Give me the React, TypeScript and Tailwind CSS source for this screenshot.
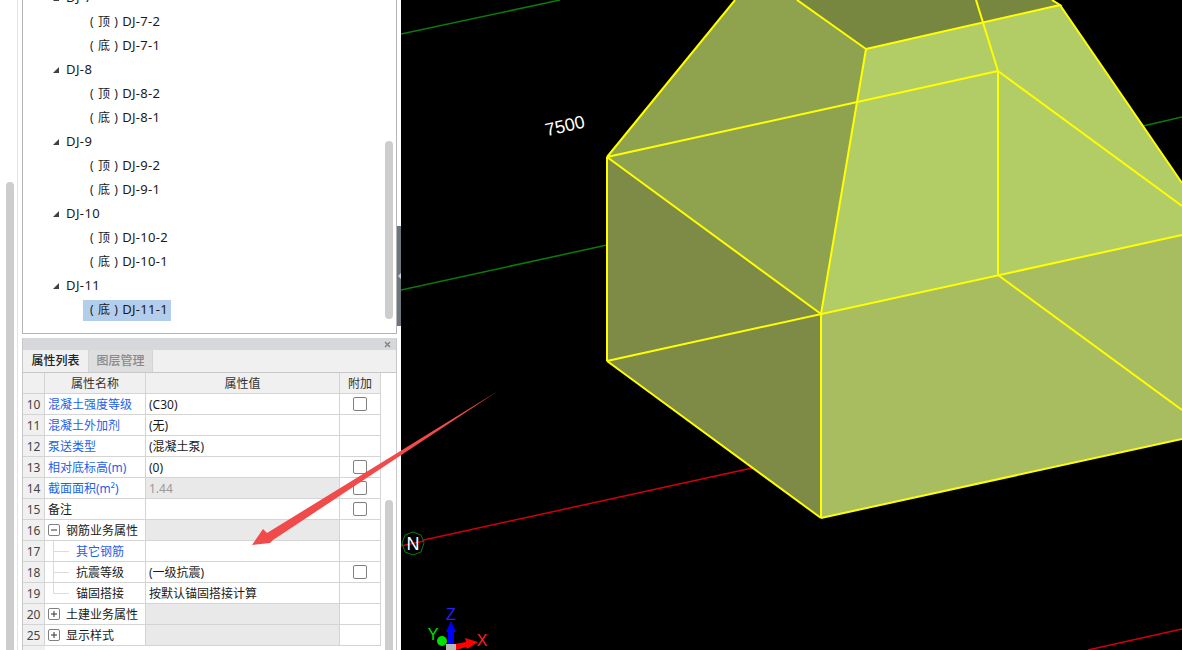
import React from 'react';

const font = { fontFamily: '"Noto Sans", "Noto Sans CJK SC", sans-serif' };

const treeGroups = [
  { name: 'DJ-7', kids: [['顶', 'DJ-7-2'], ['底', 'DJ-7-1']] },
  { name: 'DJ-8', kids: [['顶', 'DJ-8-2'], ['底', 'DJ-8-1']] },
  { name: 'DJ-9', kids: [['顶', 'DJ-9-2'], ['底', 'DJ-9-1']] },
  { name: 'DJ-10', kids: [['顶', 'DJ-10-2'], ['底', 'DJ-10-1']] },
  { name: 'DJ-11', kids: [['底', 'DJ-11-1']] },
];

type Row = {
  no: number;
  name: string;
  value?: string;
  blue?: boolean;
  check?: boolean;
  grey?: boolean;
  group?: '+' | '-';
  child?: 'mid' | 'last';
};

const rows: Row[] = [
  { no: 10, name: '混凝土强度等级', value: '(C30)', blue: true, check: true },
  { no: 11, name: '混凝土外加剂', value: '(无)', blue: true },
  { no: 12, name: '泵送类型', value: '(混凝土泵)', blue: true },
  { no: 13, name: '相对底标高(m)', value: '(0)', blue: true, check: true },
  { no: 14, name: '截面面积(m²)', value: '1.44', blue: true, check: true, grey: true },
  { no: 15, name: '备注', check: true },
  { no: 16, name: '钢筋业务属性', group: '-' },
  { no: 17, name: '其它钢筋', blue: true, child: 'mid' },
  { no: 18, name: '抗震等级', value: '(一级抗震)', check: true, child: 'mid' },
  { no: 19, name: '锚固搭接', value: '按默认锚固搭接计算', child: 'last' },
  { no: 20, name: '土建业务属性', group: '+' },
  { no: 25, name: '显示样式', group: '+' },
];

function TreeArrow() {
  return (
    <svg width="6" height="6" viewBox="0 0 6 6" className="shrink-0">
      <path d="M6 0V6H0Z" fill="#404040" />
    </svg>
  );
}

function Tree() {
  return (
    <div className="relative h-[334px] shrink-0 overflow-hidden border-x border-b border-[#b4b4b4] bg-white text-xs text-[#1a1a1a]">
      <div className="-mt-[14px]">
        {treeGroups.map((g) => (
          <div key={g.name}>
            <div className="flex h-6 items-center pl-[30px]">
              <TreeArrow />
              <span className="ml-[7px] text-[13px] tracking-[0.4px]">{g.name}</span>
            </div>
            {g.kids.map(([mark, label]) => (
              <div key={label} className="flex h-6 items-center pl-[60px]">
                <div className={`flex h-[21px] w-[88px] items-center pl-[7px] [word-spacing:1.2px] ${label === 'DJ-11-1' ? 'bg-[#b3cdec]' : ''}`}>
                  <span className="whitespace-pre">{`( ${mark} ) `}</span>
                  <span className="text-[13px] tracking-[0.3px]">{label}</span>
                </div>
              </div>
            ))}
          </div>
        ))}
      </div>
      {/* scrollbar */}
      <div className="absolute left-[362px] top-[141px] h-[178px] w-2 rounded bg-[#cdcdcd]" />
    </div>
  );
}

function Box({ mark }: { mark: '+' | '-' }) {
  return (
    <span className="flex h-[12px] w-[12px] shrink-0 items-center justify-center rounded-[2px] border border-[#808080] bg-white">
      <svg width="6" height="6" viewBox="0 0 6 6">
        <path d={mark === '+' ? 'M0 3H6M3 0V6' : 'M0 3H6'} stroke="#333" strokeWidth="1" />
      </svg>
    </span>
  );
}

function PropRow({ row }: { row: Row }) {
  const nameColor = row.blue ? 'text-[#1f5fe8]' : 'text-[#1a1a1a]';
  return (
    <div className="flex h-[21px] border-b border-[#d4d4d4]">
      <div className="flex w-[22px] shrink-0 items-center justify-center border-r border-[#d4d4d4] bg-[#f0f0f0] pt-[2px] text-[#444]">{row.no}</div>
      <div className={`relative flex w-[101px] shrink-0 items-center border-r border-[#d4d4d4] ${row.child ? 'pl-[31px]' : 'pl-[3px]'} ${nameColor}`}>
        {row.group && <Box mark={row.group} />}
        <span className={`pt-[2px] ${row.group ? 'ml-[6px]' : ''}`}>{row.name}</span>
        {row.child && (
          <>
            <div className={`absolute left-[8px] top-0 w-px bg-[#dcdcdc] ${row.child === 'last' ? 'h-[11px]' : 'h-[21px]'}`} />
            <div className="absolute left-[8px] top-[10px] h-px w-[16px] bg-[#dcdcdc]" />
          </>
        )}
      </div>
      <div className={`flex w-[194px] shrink-0 items-center border-r border-[#d4d4d4] pl-[3px] pt-[2px] ${row.group || row.grey ? 'bg-[#e9e9e9]' : ''} ${row.grey ? 'text-[#999]' : 'text-[#1a1a1a]'}`}>
        {row.value}
      </div>
      <div className="flex w-[41px] shrink-0 items-center justify-center border-r border-[#d4d4d4]">
        {row.check && <span className="h-[14px] w-[14px] rounded-[2px] border border-[#808080] bg-white" />}
      </div>
    </div>
  );
}

function Props() {
  return (
    <div className="relative mt-[4px] flex min-h-0 flex-1 flex-col overflow-hidden border-x border-[#c8c8c8] bg-white text-xs">
      <div className="flex h-[12px] shrink-0 items-center justify-end bg-[#d6d8db] pr-[5px]">
        <svg width="7" height="7" viewBox="0 0 7 7">
          <path d="M1 1L6 6M6 1L1 6" stroke="#808080" strokeWidth="1.4" />
        </svg>
      </div>
      <div className="flex h-[23px] shrink-0 border-b border-[#c8c8c8] bg-[#f0f0f0]">
        <div className="flex w-[65px] items-center justify-center font-medium text-[#222]">属性列表</div>
        <div className="flex w-[65px] items-center justify-center border-x border-[#d4d4d4] bg-[#dedede] font-medium text-[#8a8a8a]">图层管理</div>
      </div>
      <div className="flex h-[21px] w-[358px] shrink-0 border-b border-[#d4d4d4] bg-[#f0f0f0] text-[#333]">
        <div className="w-[22px] shrink-0 border-r border-[#d4d4d4]" />
        <div className="flex w-[101px] shrink-0 items-center justify-center border-r border-[#d4d4d4] pt-[2px]">属性名称</div>
        <div className="flex w-[194px] shrink-0 items-center justify-center border-r border-[#d4d4d4] pt-[2px]">属性值</div>
        <div className="flex w-[41px] shrink-0 items-center justify-center border-r border-[#d4d4d4] pt-[2px]">附加</div>
      </div>
      <div className="w-[358px] shrink-0">
        {rows.map((r) => (
          <PropRow key={r.no} row={r} />
        ))}
      </div>
      <div className="w-[22px] flex-1 bg-[#f0f0f0]" />
      {/* scrollbar */}
      <div className="absolute left-[362px] top-[162px] h-[200px] w-2 rounded bg-[#cdcdcd]" />
    </div>
  );
}

function Model() {
  const yellow = '#ffff00';
  const edges = [
    'M607 157L735 0',
    'M797 0L866 49',
    'M976 0L998 71',
    'M866 49L1060 5L1052 0',
    'M1060 5L1182 183',
    'M607 157L998 71',
    'M866 49L821 314',
    'M998 71V275',
    'M998 71L1182 206',
    'M607 157L821 314',
    'M607 361L1182 235',
    'M607 157V361',
    'M607 361L821 518',
    'M821 314V518',
    'M821 518L1182 439',
    'M998 275L1182 410',
  ];
  return (
    <svg className="h-full w-full" viewBox="401 0 781 650">
      <path d="M401 34L560 0" stroke="#0a7a0a" strokeWidth="1.5" />
      <path d="M401 290L607 245" stroke="#0a7a0a" strokeWidth="1.5" />
      <path d="M1143 126L1182 117" stroke="#0a7a0a" strokeWidth="1.5" />
      <path d="M401 545L752 468" stroke="#d00010" strokeWidth="1.5" />
      <path d="M1088 650L1182 629" stroke="#d00010" strokeWidth="1.5" />

      <path d="M607 157L821 314V518L607 361Z" fill="#7d8b47" />
      <path d="M607 157L735 0H797L866 49L821 314Z" fill="#8fa34e" />
      <path d="M797 0H1052L1060 5L866 49Z" fill="#78873f" />
      <path d="M866 49L1060 5L1182 183V235L821 314Z" fill="#b2cc66" />
      <path d="M821 314L1182 235V439L821 518Z" fill="#a8bd5f" />
      {edges.map((d) => (
        <path key={d} d={d} fill="none" stroke={yellow} strokeWidth="2" />
      ))}

      <text x="565" y="132" textAnchor="middle" fill="#fff" fontSize="18" fontFamily="Liberation Sans" transform="rotate(-13 565 126)">7500</text>

      <path d="M413 532L421 535L424 543L421 552L413 555L405 552L402 543L405 535Z" fill="#000" stroke="#0a7a0a" />
      <path d="M401 546L424 541" stroke="#d00010" strokeWidth="1.5" />
      <text x="413" y="550" textAnchor="middle" fill="#fff" fontSize="18" fontFamily="Liberation Sans">N</text>

      {/* axis widget */}
      <path d="M448 632V644H454V632H456L451 621L446 632Z" fill="#0000ff" />
      <circle cx="442" cy="641" r="5" fill="#00e000" />
      <path d="M455 644L466 642L465 638L478 642L467 649L466 647L456 650Z" fill="#ff0000" />
      <rect x="446" y="644" width="10" height="6" fill="#b8b8b8" />
      <text x="451" y="620" textAnchor="middle" fill="#2222ff" fontSize="16" fontFamily="Liberation Sans">Z</text>
      <text x="433" y="640" textAnchor="middle" fill="#00e000" fontSize="16" fontFamily="Liberation Sans">Y</text>
      <text x="482" y="646" textAnchor="middle" fill="#ff2020" fontSize="16" fontFamily="Liberation Sans">X</text>
    </svg>
  );
}

export default function App() {
  return (
    <div className="relative flex h-[650px] w-[1182px] overflow-hidden bg-white" style={font}>
      {/* outer gutter with its scrollbar */}
      <div className="relative w-[22px] shrink-0">
        <div className="absolute left-[6px] top-[182px] h-[480px] w-2 rounded bg-[#cdcdcd]" />
        <div className="absolute left-[17px] top-0 h-full w-px bg-[#e4e4e4]" />
      </div>

      <div className="flex w-[375px] shrink-0 flex-col">
        <Tree />
        <Props />
      </div>

      {/* splitter */}
      <div className="w-1 shrink-0 pt-[226px]">
        <div className="flex h-[100px] w-full items-center justify-end bg-[#6b7680]">
          <span className="h-[6px] w-[3px] bg-[#cfd4d8] [clip-path:polygon(100%_0,100%_100%,0_50%)]" />
        </div>
      </div>

      <div className="min-w-0 flex-1 bg-black">
        <Model />
      </div>

      {/* red annotation arrow drawn on top of the screenshot */}
      <svg className="pointer-events-none absolute left-0 top-0" width="1182" height="650" viewBox="0 0 1182 650">
        <path d="M498 391L273 540L270 543L252 545L263 529L267 533Z" fill="#f04a4a" />
      </svg>
    </div>
  );
}
